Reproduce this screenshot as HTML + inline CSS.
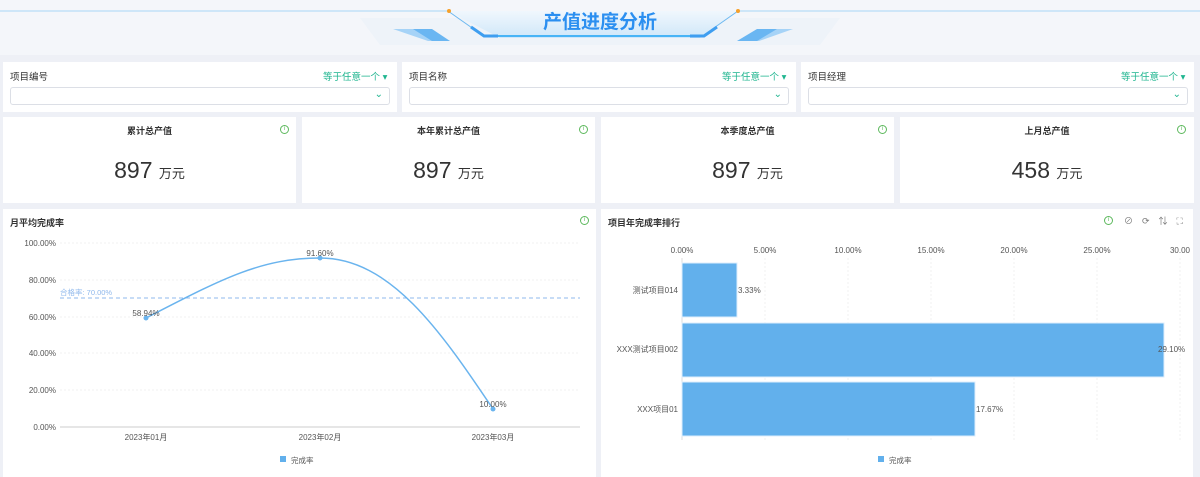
<!DOCTYPE html>
<html><head><meta charset="utf-8"><style>
*{margin:0;padding:0;box-sizing:border-box}
body{width:1200px;height:477px;overflow:hidden;background:#eef0f6;font-family:"Liberation Sans","Noto Sans CJK SC",sans-serif;position:relative;color:#333}
.p{position:absolute;background:#fff}
.lbl{position:absolute;font-size:9.5px;color:#333}
.eq{position:absolute;font-size:9.5px;color:#1fb58f}
.sel{position:absolute;border:1px solid #dcdfe6;border-radius:3px;height:18px;background:#fff}
.kt{position:absolute;width:100%;text-align:center;top:7px;font-size:9px;font-weight:bold;color:#333}
.kv{position:absolute;width:100%;text-align:center;top:40px;font-size:23px;color:#333}
.kv span{font-size:13px}
.info{position:absolute;width:9px;height:9px;border:1px solid #5cb85c;border-radius:50%;font-size:6px;color:#5cb85c;text-align:center;line-height:7px}
</style></head><body>
<div style="position:absolute;left:0;top:0;width:1200px;height:55px;background:#f4f6fa"></div>
<svg style="position:absolute;left:0;top:0" width="1200" height="55">
<defs><linearGradient id="g" x1="0" y1="0" x2="0" y2="1"><stop offset="0" stop-color="#f0f7fd"/><stop offset="1" stop-color="#cfe7f9"/></linearGradient></defs>
<polygon points="360,18 840,18 820,45 380,45" fill="#eef3f9"/>
<line x1="0" y1="11" x2="448" y2="11" stroke="#a9d5f5"/>
<line x1="738" y1="11" x2="1200" y2="11" stroke="#a9d5f5"/>
<polygon points="448,11 738,11 700,38 500,38" fill="url(#g)"/>
<line x1="448" y1="11" x2="475" y2="30" stroke="#6cb8f0"/>
<line x1="738" y1="11" x2="711" y2="30" stroke="#6cb8f0"/>
<circle cx="449" cy="11" r="2" fill="#f6a02a"/><circle cx="738" cy="11" r="2" fill="#f6a02a"/>
<path d="M471,27 L484,36 L498,36" stroke="#3f9ef0" stroke-width="3" fill="none"/>
<path d="M717,27 L704,36 L690,36" stroke="#3f9ef0" stroke-width="3" fill="none"/>
<line x1="498" y1="36" x2="690" y2="36" stroke="#1aa3f5" stroke-width="1.5"/>
<polygon points="393,29 415,29 450,41 428,41" fill="#a6d3f7"/>
<polygon points="413,29 432,29 450,41 432,41" fill="#6ab6f2"/>
<polygon points="737,41 759,41 793,29 771,29" fill="#a6d3f7"/>
<polygon points="737,41 757,41 777,29 757,29" fill="#6ab6f2"/>
</svg>
<div style="position:absolute;left:0;width:1200px;top:7px;text-align:center;font-size:19px;font-weight:bold;color:#2b8ff0;font-family:'Noto Sans CJK SC',sans-serif">产值进度分析</div>

<div class="p" style="left:3px;top:62px;width:394px;height:50px"><div class="lbl" style="left:7px;top:7px">项目编号</div><div class="eq" style="left:320px;top:7px">等于任意一个 ▾</div><div class="sel" style="left:7px;top:25px;width:380px"><span style="position:absolute;right:6px;top:1px;color:#1fb58f;font-size:10px">⌄</span></div></div>
<div class="p" style="left:402px;top:62px;width:394px;height:50px"><div class="lbl" style="left:7px;top:7px">项目名称</div><div class="eq" style="left:320px;top:7px">等于任意一个 ▾</div><div class="sel" style="left:7px;top:25px;width:380px"><span style="position:absolute;right:6px;top:1px;color:#1fb58f;font-size:10px">⌄</span></div></div>
<div class="p" style="left:801px;top:62px;width:393px;height:50px"><div class="lbl" style="left:7px;top:7px">项目经理</div><div class="eq" style="left:320px;top:7px">等于任意一个 ▾</div><div class="sel" style="left:7px;top:25px;width:380px"><span style="position:absolute;right:6px;top:1px;color:#1fb58f;font-size:10px">⌄</span></div></div>

<div class="p" style="left:3px;top:117px;width:293px;height:86px"><div class="kt">累计总产值</div><div class="info" style="left:277px;top:8px">i</div><div class="kv">897 <span>万元</span></div></div>
<div class="p" style="left:302px;top:117px;width:293px;height:86px"><div class="kt">本年累计总产值</div><div class="info" style="left:277px;top:8px">i</div><div class="kv">897 <span>万元</span></div></div>
<div class="p" style="left:601px;top:117px;width:293px;height:86px"><div class="kt">本季度总产值</div><div class="info" style="left:277px;top:8px">i</div><div class="kv">897 <span>万元</span></div></div>
<div class="p" style="left:900px;top:117px;width:294px;height:86px"><div class="kt">上月总产值</div><div class="info" style="left:277px;top:8px">i</div><div class="kv">458 <span>万元</span></div></div>

<div class="p" style="left:3px;top:209px;width:593px;height:268px"><div class="lbl" style="left:7px;top:7px;font-weight:bold;font-size:9px">月平均完成率</div><div class="info" style="left:577px;top:7px">i</div></div>
<div class="p" style="left:601px;top:209px;width:592px;height:268px"><div class="lbl" style="left:7px;top:7px;font-weight:bold;font-size:9px">项目年完成率排行</div><div class="info" style="left:503px;top:7px">i</div>
<div style="position:absolute;left:523px;top:5px;font-size:9px;color:#777;letter-spacing:9px">⊘⟳⇅⛶</div></div>

<svg style="position:absolute;left:0;top:0" width="1200" height="477" font-family="Liberation Sans,Noto Sans CJK SC,sans-serif" font-size="8" fill="#555">
<g stroke="#f0f0f0" stroke-dasharray="2,2">
<line x1="60" y1="243" x2="580" y2="243"/><line x1="60" y1="280" x2="580" y2="280"/><line x1="60" y1="317" x2="580" y2="317"/><line x1="60" y1="353" x2="580" y2="353"/><line x1="60" y1="390" x2="580" y2="390"/>
</g>
<line x1="60" y1="427" x2="580" y2="427" stroke="#ccc"/>
<g text-anchor="end"><text x="56" y="246">100.00%</text><text x="56" y="283">80.00%</text><text x="56" y="320">60.00%</text><text x="56" y="356">40.00%</text><text x="56" y="393">20.00%</text><text x="56" y="430">0.00%</text></g>
<line x1="60" y1="298" x2="580" y2="298" stroke="#8fb8ec" stroke-dasharray="4,3"/>
<text x="60" y="295" fill="#8fb8ec" font-size="7.5">合格率: 70.00%</text>
<path d="M146,318 C220,280 260,258 320,258 C390,258 440,330 493,409" stroke="#6ab4ee" stroke-width="1.5" fill="none"/>
<circle cx="146" cy="318" r="2.5" fill="#6ab4ee"/><circle cx="320" cy="258" r="2.5" fill="#6ab4ee"/><circle cx="493" cy="409" r="2.5" fill="#6ab4ee"/>
<g text-anchor="middle"><text x="146" y="316">58.94%</text><text x="320" y="256">91.60%</text><text x="493" y="407">10.00%</text>
<text x="146" y="440">2023年01月</text><text x="320" y="440">2023年02月</text><text x="493" y="440">2023年03月</text></g>
<rect x="280" y="456" width="6" height="6" fill="#62b0ec"/><text x="291" y="463" font-size="7.5">完成率</text>

<g stroke="#f0f0f0" stroke-dasharray="2,2"><line x1="765" y1="258" x2="765" y2="440"/><line x1="848" y1="258" x2="848" y2="440"/><line x1="931" y1="258" x2="931" y2="440"/><line x1="1014" y1="258" x2="1014" y2="440"/><line x1="1097" y1="258" x2="1097" y2="440"/><line x1="1180" y1="258" x2="1180" y2="440"/></g>
<line x1="682" y1="258" x2="682" y2="440" stroke="#ddd"/>
<g text-anchor="middle"><text x="682" y="253">0.00%</text><text x="765" y="253">5.00%</text><text x="848" y="253">10.00%</text><text x="931" y="253">15.00%</text><text x="1014" y="253">20.00%</text><text x="1097" y="253">25.00%</text><text x="1180" y="253">30.00</text></g>
<g fill="#62b0ec" stroke="#dceefc"><rect x="682" y="263" width="55" height="54"/><rect x="682" y="323" width="482" height="54"/><rect x="682" y="382" width="293" height="54"/></g>
<g text-anchor="end"><text x="678" y="293">测试项目014</text><text x="678" y="352">XXX测试项目002</text><text x="678" y="412">XXX项目01</text></g>
<text x="738" y="293">3.33%</text><text x="1158" y="352">29.10%</text><text x="976" y="412">17.67%</text>
<rect x="878" y="456" width="6" height="6" fill="#62b0ec"/><text x="889" y="463" font-size="7.5">完成率</text>
</svg>
</body></html>
